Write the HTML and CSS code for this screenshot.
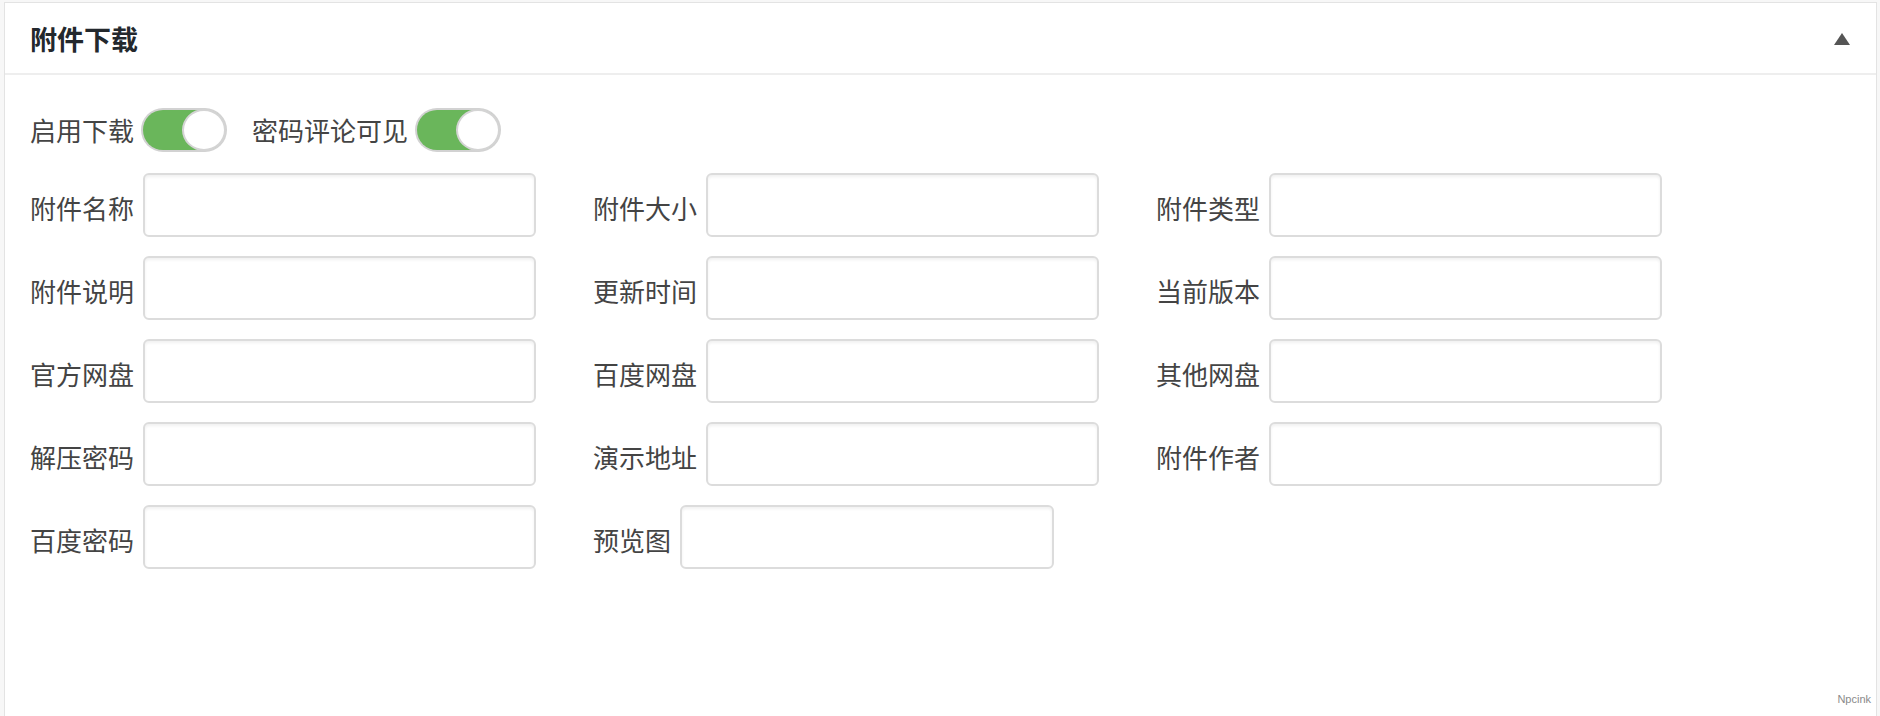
FILE: index.html
```html
<!DOCTYPE html>
<html lang="zh-CN">
<head>
<meta charset="utf-8">
<title>附件下载</title>
<link rel="stylesheet" href="styles.css">
</head>
<body>
<div class="postbox">
  <div class="postbox-header">
    <h2 class="postbox-title">附件下载</h2>
    <span class="toggle-arrow"></span>
  </div>
  <div class="postbox-body">
    <div class="switch-row">
      <label class="switch-item"><span class="label">启用下载</span><span class="switch on"><span class="knob"></span></span></label>
      <label class="switch-item"><span class="label">密码评论可见</span><span class="switch on"><span class="knob"></span></span></label>
    </div>
    <div class="fields">
      <div class="field"><span class="label">附件名称</span><input class="text-input" type="text"></div>
      <div class="field"><span class="label">附件大小</span><input class="text-input" type="text"></div>
      <div class="field"><span class="label">附件类型</span><input class="text-input" type="text"></div>

      <div class="field"><span class="label">附件说明</span><input class="text-input" type="text"></div>
      <div class="field"><span class="label">更新时间</span><input class="text-input" type="text"></div>
      <div class="field"><span class="label">当前版本</span><input class="text-input" type="text"></div>

      <div class="field"><span class="label">官方网盘</span><input class="text-input" type="text"></div>
      <div class="field"><span class="label">百度网盘</span><input class="text-input" type="text"></div>
      <div class="field"><span class="label">其他网盘</span><input class="text-input" type="text"></div>

      <div class="field"><span class="label">解压密码</span><input class="text-input" type="text"></div>
      <div class="field"><span class="label">演示地址</span><input class="text-input" type="text"></div>
      <div class="field"><span class="label">附件作者</span><input class="text-input" type="text"></div>

      <div class="field"><span class="label">百度密码</span><input class="text-input" type="text"></div>
      <div class="field"><span class="label">预览图</span><input class="text-input narrow" type="text"></div>
    </div>
  </div>
  <div class="watermark">Npcink</div>
</div>
</body>
</html>
```

FILE: styles.css
```css
html, body {
  margin: 0;
  padding: 0;
  background: #f7f7f7;
  font-family: "Noto Sans CJK SC", "Noto Sans", "Liberation Sans", sans-serif;
  color: #444;
}

.postbox {
  position: relative;
  margin: 2px 3px 0 4px;
  height: 730px;
  background: #fff;
  border: 1px solid #e3e3e3;
  box-sizing: border-box;
}

.postbox-header {
  display: flex;
  align-items: center;
  justify-content: space-between;
  height: 70px;
  padding: 0 26px 0 25px;
  border-bottom: 2px solid #eeeeee;
}

.postbox-title {
  margin: 0;
  font-size: 27px;
  font-weight: 700;
  color: #23282d;
  line-height: 1;
}

.toggle-arrow {
  width: 0;
  height: 0;
  border-left: 8px solid transparent;
  border-right: 8px solid transparent;
  border-bottom: 12px solid #555;
  margin-top: 1px;
}

.postbox-body {
  padding: 35px 25px 0 25px;
}

.switch-row {
  display: flex;
  align-items: center;
  gap: 27px;
  height: 40px;
}

.switch-item {
  display: flex;
  align-items: center;
  gap: 9px;
}

.label {
  font-size: 26px;
  line-height: 1;
  color: #444;
  white-space: nowrap;
}

.switch {
  position: relative;
  display: block;
  width: 82px;
  height: 40px;
  border-radius: 20px;
  background: #6ab65b;
  box-shadow: 0 0 0 2px #d2d2d2;
  box-sizing: border-box;
}

.switch .knob {
  position: absolute;
  top: -1px;
  right: -1px;
  width: 44px;
  height: 42px;
  border-radius: 50%;
  background: #fff;
  border: 2px solid #d4d4d4;
  box-sizing: border-box;
}

.fields {
  display: grid;
  grid-template-columns: repeat(3, 506px);
  column-gap: 57px;
  row-gap: 19px;
  margin-top: 23px;
}

.field {
  display: flex;
  align-items: center;
  gap: 9px;
  height: 64px;
}

.field .label {
  padding-top: 6px;
}

.text-input {
  width: 393px;
  height: 64px;
  box-sizing: border-box;
  border: 2px solid #dcdcdc;
  border-radius: 6px;
  background: #fff;
  box-shadow: inset 0 2px 3px rgba(0, 0, 0, 0.06);
  margin: 0;
  padding: 0 10px;
  font-size: 22px;
  font-family: inherit;
}

.text-input.narrow {
  width: 374px;
}

.watermark {
  position: absolute;
  right: 5px;
  top: 690px;
  font-family: "Liberation Sans", Arial, sans-serif;
  font-size: 11px;
  line-height: 13px;
  color: #8a8a8a;
}
```
